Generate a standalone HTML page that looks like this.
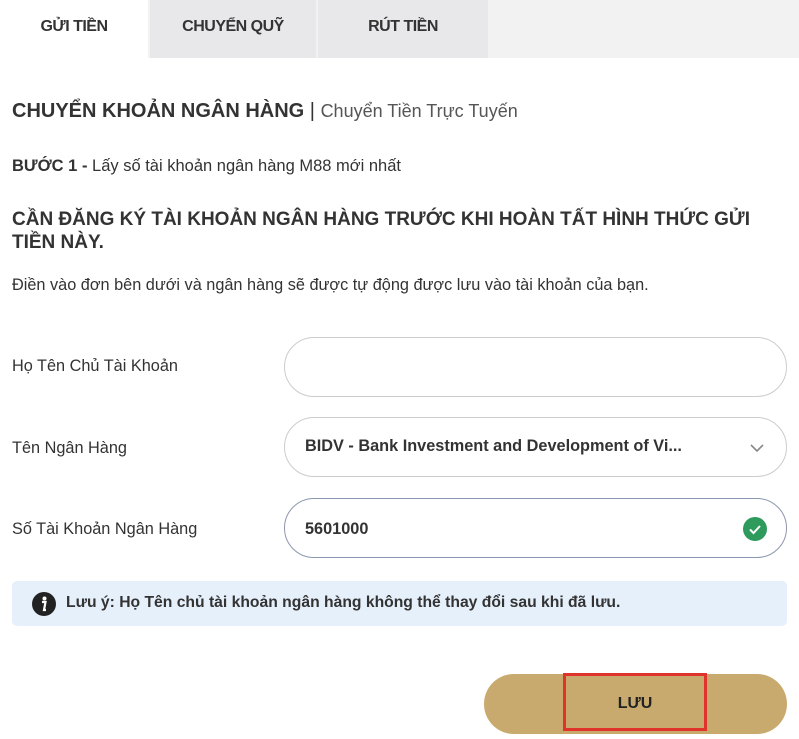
<!DOCTYPE html>
<html><head><meta charset="utf-8"><style>
body{margin:0;width:799px;height:739px;background:#fff;font-family:"Liberation Sans",sans-serif;color:#333;position:relative;overflow:hidden}
.a{position:absolute;white-space:nowrap}
.tab{position:absolute;top:0;height:58px;line-height:54px;text-align:center;font-weight:bold;font-size:16px;color:#333;letter-spacing:-0.5px}
.inp{position:absolute;left:284px;width:501px;height:58px;border:1px solid #ccc;border-radius:30px;background:#fff}
.lbl{position:absolute;left:12px;font-size:16.3px;color:#333}
</style></head><body>
<div class="a" style="left:148px;top:0;width:651px;height:58px;background:#f2f2f2"></div>
<div class="tab" style="left:0;width:148px;background:#fff">GỬI TIỀN</div>
<div class="tab" style="left:150px;width:166px;background:#e8e8ea">CHUYỂN QUỸ</div>
<div class="tab" style="left:318px;width:170px;background:#e8e8ea">RÚT TIỀN</div>
<div class="a" style="left:12px;top:100px;font-size:20px;font-weight:bold">CHUYỂN KHOẢN NGÂN HÀNG <span style="font-weight:normal;color:#333">|</span> <span style="font-weight:normal;font-size:18px;color:#555">Chuyển Tiền Trực Tuyến</span></div>
<div class="a" style="left:12px;top:157px;font-size:16.5px"><b>BƯỚC 1 -</b> Lấy số tài khoản ngân hàng M88 mới nhất</div>
<div class="a" style="left:12px;top:208px;font-size:19px;font-weight:bold;line-height:23px">CẦN ĐĂNG KÝ TÀI KHOẢN NGÂN HÀNG TRƯỚC KHI HOÀN TẤT HÌNH THỨC GỬI<br>TIỀN NÀY.</div>
<div class="a" style="left:12px;top:276px;font-size:16.3px">Điền vào đơn bên dưới và ngân hàng sẽ được tự động được lưu vào tài khoản của bạn.</div>
<div class="lbl" style="top:357px">Họ Tên Chủ Tài Khoản</div>
<div class="inp" style="top:337px"></div>
<div class="lbl" style="top:439px">Tên Ngân Hàng</div>
<div class="inp" style="top:417px"><div class="a" style="left:20px;top:19px;font-size:16.3px;font-weight:bold">BIDV - Bank Investment and Development of Vi...</div>
<svg class="a" style="left:464px;top:24px" width="16" height="12"><path d="M2 3l6 6 6-6" fill="none" stroke="#888" stroke-width="1.6"/></svg></div>
<div class="lbl" style="top:520px">Số Tài Khoản Ngân Hàng</div>
<div class="inp" style="top:498px;border-color:#8b96b0"><div class="a" style="left:20px;top:21px;font-size:16.3px;font-weight:bold">5601000</div>
<svg class="a" style="left:457px;top:17px" width="26" height="26"><circle cx="13" cy="13" r="12" fill="#2e9a5c"/><path d="M8 13.5l3.5 3.5 6.5-7" fill="none" stroke="#fff" stroke-width="2"/></svg></div>
<div class="a" style="left:12px;top:581px;width:775px;height:45px;background:#e6f0fb;border-radius:5px">
<svg class="a" style="left:20px;top:11px" width="24" height="24"><circle cx="12" cy="12" r="12" fill="#222"/><circle cx="12.5" cy="6.5" r="2" fill="#fff"/><path d="M10 10h3.5l-1.5 8h2" fill="none" stroke="#fff" stroke-width="2.2"/></svg>
<div class="a" style="left:54px;top:13px;font-size:15.7px;font-weight:bold">Lưu ý: Họ Tên chủ tài khoản ngân hàng không thể thay đổi sau khi đã lưu.</div></div>
<div class="a" style="left:484px;top:674px;width:303px;height:60px;background:#c8a96e;border-radius:30px"></div>
<div class="a" style="left:563px;top:673px;width:138px;height:52px;border:3px solid #e0332c;text-align:center;line-height:56px;font-weight:bold;font-size:16px;color:#222">LƯU</div>
</body></html>
